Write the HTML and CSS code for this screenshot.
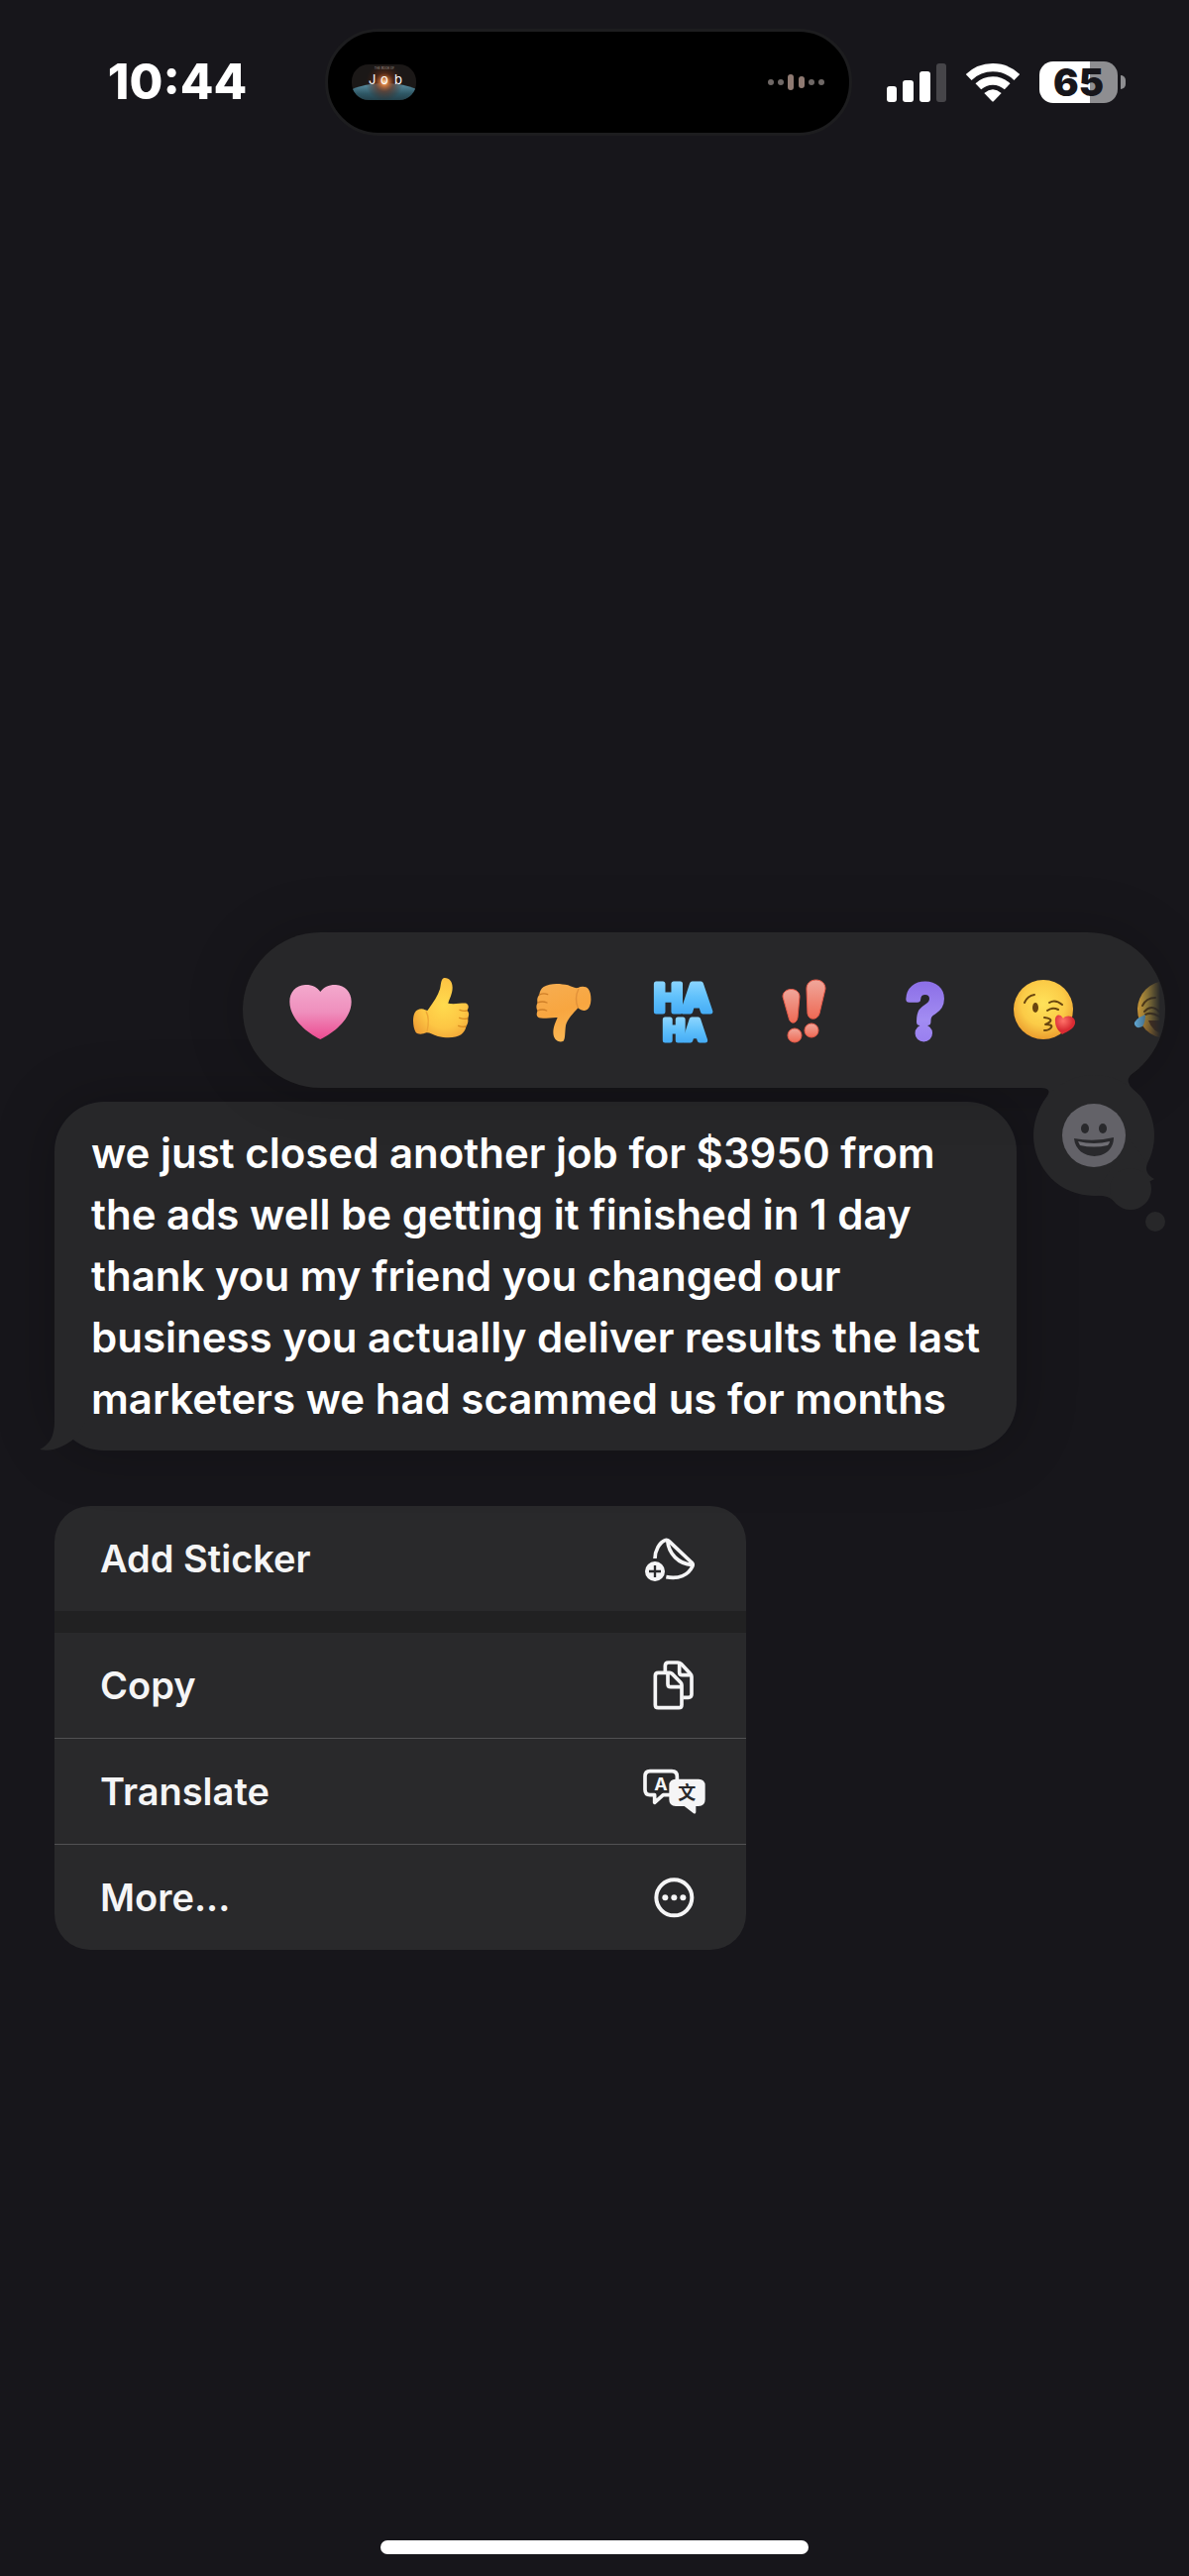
FILE: index.html
```html
<!DOCTYPE html>
<html lang="en">
<head>
<meta charset="utf-8">
<meta name="viewport" content="width=device-width, initial-scale=1">
<title>Message actions</title>
<link rel="stylesheet" href="styles.css">
</head>
<body>
<header class="status">
  <time class="clock">10:44</time>
  <div class="island">
    <svg class="cover" width="65" height="36" viewBox="0 0 65 36" role="img" aria-label="Now playing">
      <defs>
        <clipPath id="cover-clip"><rect width="65" height="36" rx="17"/></clipPath>
        <radialGradient id="sun"><stop offset="0" stop-color="#ffd9a8"/><stop offset=".2" stop-color="#c9743c"/><stop offset=".5" stop-color="#6b2f18" stop-opacity=".6"/><stop offset="1" stop-color="#3a1c12" stop-opacity="0"/></radialGradient>
        <linearGradient id="earth" x2="0" y2="1"><stop offset="0" stop-color="#5f94a8"/><stop offset=".12" stop-color="#2f5866"/><stop offset=".3" stop-color="#152127"/></linearGradient>
      </defs>
      <g clip-path="url(#cover-clip)">
        <rect width="65" height="36" fill="#1b1817"/>
        <ellipse cx="33" cy="62" rx="64" ry="43" fill="url(#earth)"/>
        <circle cx="33" cy="18" r="19" fill="url(#sun)"/>
      </g>
      <text class="cover-small" x="33" y="5" text-anchor="middle">THE BOOK OF</text>
      <text class="cover-title" x="17" y="20">J</text>
      <text class="cover-title" x="29" y="20">o</text>
      <text class="cover-title" x="43" y="20">b</text>
    </svg>
    <svg class="wave" width="58" height="18" viewBox="0 0 58 18" aria-hidden="true">
      <g fill="#6f6866"><circle cx="3" cy="9" r="3"/><circle cx="13" cy="9" r="3"/><circle cx="44" cy="9" r="3"/><circle cx="54" cy="9" r="3"/></g>
      <rect x="20" y="1" width="6" height="16" rx="3" fill="#8f7a72"/><rect x="31" y="3" width="6" height="12" rx="3" fill="#8f7a72"/>
    </svg>
  </div>
  <div class="indicators">
    <svg width="60" height="40" viewBox="0 0 60 40" role="img" aria-label="Signal">
      <g fill="#fff"><rect y="24" width="10" height="16" rx="3"/><rect x="16" y="18" width="11" height="22" rx="3"/><rect x="33" y="9" width="11" height="31" rx="3"/></g>
      <rect x="50" y="1" width="10" height="39" rx="3" fill="#464549"/>
    </svg>
    <svg width="54" height="40" viewBox="703 120 162 120" role="img" aria-label="Wi-Fi">
      <g fill="none" stroke="#fff" stroke-width="25"><path d="M711 165A105 105 0 0 1 857 165"/><path d="M740 193A64 64 0 0 1 828 193"/></g>
      <path d="M758 213Q784 191 810 213L787 237Q784 240 781 237Z" fill="#fff"/>
    </svg>
    <div class="battery"><span class="level">65</span></div>
  </div>
</header>

<main class="thread">
  <section class="reactions" aria-label="Reactions">
    <div class="strip">
      <button class="reaction" type="button" aria-label="Heart">
        <svg width="64" height="71" viewBox="153 162 192 213">
          <defs><linearGradient id="pink" x2="0" y2="1"><stop offset="0" stop-color="#f3a9cd"/><stop offset=".5" stop-color="#ef8fbd"/><stop offset="1" stop-color="#ec4a90"/></linearGradient></defs>
          <path fill="url(#pink)" d="M250 213C240 198 223 191 204 192C176 194 157 214 157 243C157 292 205 335 250 357C296 335 344 292 344 243C344 214 324 193 297 192C278 191 260 198 250 213Z"/>
        </svg>
      </button>
      <button class="reaction" type="button" aria-label="Thumbs up">
        <svg width="64" height="71" viewBox="519 162 192 213">
          <defs><radialGradient id="gold" cx=".55" cy=".45" r=".65"><stop offset="0" stop-color="#ffdb4e"/><stop offset=".6" stop-color="#fdc644"/><stop offset="1" stop-color="#f0a035"/></radialGradient></defs>
          <path fill="url(#gold)" d="M625 171C640 170 650 182 650 200C650 220 640 235 637 248C655 252 680 246 692 248C700 252 700 262 694 270C702 276 700 286 696 294C699 302 696 312 691 318C690 328 684 336 676 343C660 354 630 354 606 348C590 343 580 336 571 337C560 342 545 343 539 336C530 322 528 290 536 276C543 264 558 262 567 268L574 270C590 248 605 228 612 205C616 190 614 174 625 171Z"/>
          <g fill="none" stroke="#d98d22" stroke-width="4" stroke-linecap="round"><path d="M672 268Q684 273 694 270"/><path d="M671 292Q684 297 696 294"/><path d="M668 316Q680 321 690 318"/></g>
          <path d="M570 272Q582 295 573 334" fill="none" stroke="#eda535" stroke-width="4"/>
        </svg>
      </button>
      <button class="reaction" type="button" aria-label="Thumbs down">
        <svg width="64" height="71" viewBox="885 162 192 213">
          <defs><linearGradient id="amber" x2=".3" y2="1"><stop offset="0" stop-color="#f6ae52"/><stop offset=".55" stop-color="#f8a640"/><stop offset="1" stop-color="#f9b552"/></linearGradient></defs>
          <path fill="url(#amber)" d="M1069 240C1068 256 1062 268 1050 270C1038 271 1034 264 1030 262C1015 280 998 295 993 315C990 335 992 355 986 362C975 368 960 362 956 345C952 325 962 305 968 291C950 290 925 296 912 292C903 288 904 277 908 270C902 262 904 252 908 246C905 238 907 228 913 222C914 212 918 204 926 198C945 186 975 187 1000 193C1010 197 1020 203 1030 201C1040 195 1055 196 1061 204C1067 212 1070 225 1069 240Z"/>
          <g fill="none" stroke="#cf7f28" stroke-width="4" stroke-linecap="round"><path d="M913 222Q926 216 938 221"/><path d="M908 246Q922 240 936 246"/><path d="M908 270Q922 264 935 270"/></g>
          <path d="M1032 204Q1018 232 1030 262" fill="none" stroke="#e1913a" stroke-width="4"/>
        </svg>
      </button>
      <button class="reaction" type="button" aria-label="Ha ha">
        <svg width="64" height="71" viewBox="657 984 64 71">
          <defs><linearGradient id="blue" x2="0" y2="1"><stop offset="0" stop-color="#9bdcff"/><stop offset=".5" stop-color="#5fc0fb"/><stop offset="1" stop-color="#3ba4f3"/></linearGradient></defs>
          <g fill="url(#blue)" stroke="url(#blue)" stroke-linejoin="round" text-anchor="middle">
            <text class="haha haha-big" x="689" y="1021">HA</text>
            <text class="haha haha-small" x="691" y="1050">HA</text>
          </g>
        </svg>
      </button>
      <button class="reaction" type="button" aria-label="Emphasize">
        <svg width="64" height="71" viewBox="779 984 64 71">
          <defs><linearGradient id="coral" x2="0" y2="1"><stop offset="0" stop-color="#f0a79b"/><stop offset="1" stop-color="#ee6a55"/></linearGradient></defs>
          <g fill="url(#coral)" stroke="#e85a48" stroke-width="1">
            <path d="M790 1006C790 996 807 996 807 1006L805 1027C804 1034 797 1034 796 1027Z"/>
            <path d="M814 998C814 986 833 986 833 998L827 1023C825 1030 816 1030 815 1023Z"/>
            <circle cx="802" cy="1045" r="7"/><circle cx="819" cy="1040" r="7"/>
          </g>
        </svg>
      </button>
      <button class="reaction" type="button" aria-label="Question">
        <svg width="64" height="71" viewBox="901 984 64 71">
          <defs><linearGradient id="violet" x2="0" y2="1"><stop offset="0" stop-color="#8465e3"/><stop offset=".6" stop-color="#a28cf2"/><stop offset="1" stop-color="#9478ee"/></linearGradient></defs>
          <text class="query" x="934" y="1047" text-anchor="middle" fill="url(#violet)" stroke="url(#violet)">?</text>
        </svg>
      </button>
      <button class="reaction" type="button" aria-label="Blowing a kiss">
        <svg width="64" height="71" viewBox="1023 984 64 71">
          <defs><radialGradient id="face" cx=".5" cy=".4" r=".62"><stop offset="0" stop-color="#ffe25a"/><stop offset=".6" stop-color="#fbcb47"/><stop offset="1" stop-color="#e9992c"/></radialGradient>
          <radialGradient id="red" cx=".4" cy=".3"><stop offset="0" stop-color="#ff7268"/><stop offset="1" stop-color="#d92b33"/></radialGradient></defs>
          <circle cx="1053" cy="1019" r="30" fill="url(#face)"/>
          <ellipse cx="1045" cy="1017" rx="3" ry="5" fill="#69450f"/>
          <g fill="none" stroke="#69450f" stroke-width="2" stroke-linecap="round" stroke-linejoin="round">
            <path d="M1034 1012Q1037 1005 1044 1004"/><path d="M1059 1012Q1065 1008 1072 1014"/><path d="M1057 1020Q1062 1016 1068 1019"/>
            <path d="M1054 1027Q1062 1028 1060 1031Q1058 1033 1055 1034Q1063 1034 1061 1037Q1059 1040 1054 1040"/>
          </g>
          <path fill="url(#red)" d="M1073 1028C1070 1022 1064 1024 1065 1031C1065 1037 1069 1041 1072 1044C1078 1041 1084 1038 1085 1033C1086 1026 1077 1023 1073 1028Z"/>
        </svg>
      </button>
      <button class="reaction" type="button" aria-label="Laughing">
        <svg width="64" height="71" viewBox="1145 984 64 71">
          <circle cx="1177" cy="1019" r="29" fill="url(#face)"/>
          <g fill="none" stroke="#69450f" stroke-width="2" stroke-linecap="round"><path d="M1153 1015Q1157 1007 1166 1007"/><path d="M1155 1021Q1162 1013 1170 1021"/><path d="M1156 1024Q1162 1021 1170 1026"/></g>
          <path d="M1156 1024Q1144 1029 1145 1034Q1147 1039 1153 1036Q1156 1032 1156 1024Z" fill="#66b6e8"/>
          <path d="M1159 1030H1176V1044Q1163 1042 1159 1030Z" fill="#6d3b14"/>
        </svg>
      </button>
    </div>
    <button class="tail" type="button" aria-label="Choose another emoji">
      <svg width="140" height="168" viewBox="1040 1078 140 168">
        <g fill="#272729">
          <path d="M1050 1098Q1062 1098 1057 1106Q1048 1118 1046 1130H1162Q1158 1110 1144 1100Q1135 1092 1141 1085L1150 1078H1050Z"/>
          <circle cx="1104" cy="1146" r="61"/>
          <path d="M1104 1207Q1118 1206 1124 1212L1165 1190Q1154 1184 1158 1174L1140 1150Z"/>
          <circle cx="1141" cy="1200" r="21"/><circle cx="1166" cy="1233" r="10"/>
        </g>
        <circle cx="1104" cy="1146" r="32" fill="#636268"/>
        <g fill="#29292c"><ellipse cx="1095" cy="1139" rx="4" ry="5"/><ellipse cx="1113" cy="1139" rx="4" ry="5"/><path d="M1084 1149Q1104 1153 1124 1148C1124 1173 1086 1173 1084 1149Z"/></g>
        <path d="M1088 1152Q1104 1156 1120 1152Q1120 1154 1118 1156Q1104 1159 1090 1156Z" fill="#6f6e74"/>
      </svg>
    </button>
  </section>

  <article class="bubble">
    <p class="message">we just closed another job for $3950 from the ads well be getting it finished in 1 day thank you my friend you changed our business you actually deliver results the last marketers we had scammed us for months</p>
    <svg class="bubble-tail" width="50" height="64" viewBox="40 1400 50 64" aria-hidden="true"><path d="M55 1400V1434C55 1450 50 1458 40 1463C54 1466 66 1459 75 1452L90 1430V1400Z" fill="#272729"/></svg>
  </article>

  <ul class="menu">
    <li class="item"><button class="action" type="button">Add Sticker
      <svg width="64" height="50" viewBox="147 114 192 150" aria-hidden="true">
        <g fill="none" stroke="#f5f5f6" stroke-width="11" stroke-linejoin="round"><path d="M183 189C183 165 197 140 213 134Q220 131 226 137L294 201Q300 206 296 214C284 240 255 252 217 245"/><path d="M221 134C224 175 255 206 295 208"/></g>
        <circle cx="183" cy="228" r="30" fill="#f5f5f6"/><path d="M165 228H201M183 210V246" stroke="#29292b" stroke-width="7"/>
      </svg></button></li>
    <li class="item item-group"><button class="action" type="button">Copy
      <svg width="64" height="50" viewBox="147 500 192 150" aria-hidden="true">
        <g fill="none" stroke="#f5f5f6" stroke-width="11" stroke-linejoin="round"><path d="M193 537H228Q232 537 235 540L261 567Q264 570 264 574V634Q264 643 255 643H193Q184 643 184 634V546Q184 537 193 537Z"/><path d="M222 538V571Q222 580 231 580H263"/><path d="M214 534V516Q214 506 224 506H252Q258 506 262 510L290 540Q294 544 294 549V602Q294 612 284 612H268"/><path d="M257 507V535Q257 544 266 544H293"/></g>
      </svg></button></li>
    <li class="item item-line"><button class="action" type="button">Translate
      <svg width="64" height="50" viewBox="147 130 192 150" aria-hidden="true">
        <path d="M168 144H234Q250 144 250 160V200Q250 216 234 216H208L182 239V216H168Q153 216 153 200V160Q153 144 168 144Z" fill="none" stroke="#f5f5f6" stroke-width="11" stroke-linejoin="round"/>
        <path d="M246 168H315Q335 168 335 188V230Q335 250 315 250H307V268Q306 276 298 270L272 250H246Q226 250 226 230V188Q226 168 246 168Z" fill="#f5f5f6"/>
        <text class="glyph-a" x="201" y="203" text-anchor="middle">A</text>
        <text class="glyph-wen" x="280" y="230" text-anchor="middle">文</text>
      </svg></button></li>
    <li class="item item-line"><button class="action" type="button">More...
      <svg width="64" height="50" viewBox="147 452 192 150" aria-hidden="true">
        <circle cx="241" cy="528" r="54" fill="none" stroke="#f5f5f6" stroke-width="12"/><g fill="#f5f5f6"><circle cx="214" cy="528" r="9"/><circle cx="241" cy="528" r="9"/><circle cx="268" cy="528" r="9"/></g>
      </svg></button></li>
  </ul>
</main>
<div class="home"></div>
</body>
</html>
```
FILE: styles.css
```css
* { box-sizing: border-box; }

body {
  margin: 0;
  min-height: 100vh;
  display: flex;
  flex-direction: column;
  background: #17161b;
  color: #fff;
  font-family: Inter, "Liberation Sans", sans-serif;
}

button {
  margin: 0;
  padding: 0;
  border: 0;
  background: none;
  color: inherit;
  font: inherit;
}

svg { display: block; overflow: visible; }

/* Status bar */
.status {
  display: grid;
  grid-template-columns: 1fr minmax(0, 532px) 1fr;
  align-items: center;
  padding: 29px 12px 0 0;
}

.clock {
  padding-left: 30px;
  text-align: center;
  font-size: 49px;
  line-height: 58px;
  font-weight: 800;
}

.island {
  display: flex;
  align-items: center;
  justify-content: space-between;
  height: 108px;
  padding: 0 24px;
  border: 3px solid #1d1d1f;
  border-radius: 54px;
  background: #000;
}

.cover-small { font-size: 3px; fill: #a39a94; }
.cover-title { font-size: 13px; fill: #fff; }

.indicators {
  display: flex;
  align-items: center;
  justify-content: flex-end;
  gap: 20px;
  padding-right: 60px;
}

.battery {
  position: relative;
  width: 79px;
  height: 42px;
  border-radius: 14px;
  background: linear-gradient(90deg, #fff 65%, #8e8e91 65%);
  color: #17161b;
  text-align: center;
}

.battery::after {
  content: "";
  position: absolute;
  left: 82px;
  top: 14px;
  width: 5px;
  height: 14px;
  border-radius: 0 7px 7px 0;
  background: #8e8e91;
}

.level { font-size: 38px; line-height: 42px; font-weight: 900; }

/* Message and its overlays */
.thread {
  display: flex;
  flex-direction: column;
  padding: 804px 24px 80px 55px;
}

.reactions {
  position: relative;
  z-index: 1;
  align-self: flex-end;
  width: 100%;
  max-width: 931px;
  border-radius: 79px;
  background: #272729;
  box-shadow: 0 0 60px rgba(0, 0, 0, 0.2);
}

.strip {
  display: flex;
  overflow: hidden;
  padding-left: 17px;
  border-radius: 79px;
  mask-image: linear-gradient(90deg, #000 calc(100% - 34px), transparent calc(100% - 5px));
}

.reaction {
  flex: none;
  display: grid;
  place-items: center;
  width: 122px;
  height: 157px;
}

.haha { font-weight: 800; stroke-width: 5px; }
.haha-big { font-size: 38px; }
.haha-small { font-size: 28px; }
.query { font-size: 72px; font-weight: 500; stroke-width: 7px; stroke-linejoin: round; }

.tail {
  position: absolute;
  top: 137px;
  right: -4px;
}

.bubble {
  position: relative;
  max-width: 971px;
  margin-top: 14px;
  padding: 21px 32px 21px 37px;
  border-radius: 50px;
  background: #272729;
  box-shadow: 0 0 60px rgba(0, 0, 0, 0.25);
}

.message {
  margin: 0;
  font-size: 42px;
  line-height: 62px;
  font-weight: 600;
}

.bubble-tail {
  position: absolute;
  left: -15px;
  bottom: 0;
}

/* Context menu */
.menu {
  width: 100%;
  max-width: 698px;
  margin: 56px 0 0;
  padding: 0;
  overflow: hidden;
  border-radius: 36px;
  background: #29292b;
  list-style: none;
}

.item-group { border-top: 22px solid #212122; }
.item-line { border-top: 1px solid #515153; }

.action {
  display: flex;
  align-items: center;
  justify-content: space-between;
  width: 100%;
  height: 106px;
  padding: 0 40px 0 46px;
  color: #f5f5f6;
  font-size: 38px;
  line-height: 46px;
  font-weight: 600;
  text-align: left;
}

.glyph-a { font-size: 54px; font-weight: 700; fill: #f5f5f6; }
.glyph-wen { font-family: "Noto Sans CJK SC", sans-serif; font-size: 54px; font-weight: 700; fill: #29292b; }

.home {
  width: 36%;
  height: 14px;
  margin: auto auto 22px;
  border-radius: 7px;
  background: #fff;
}
```
